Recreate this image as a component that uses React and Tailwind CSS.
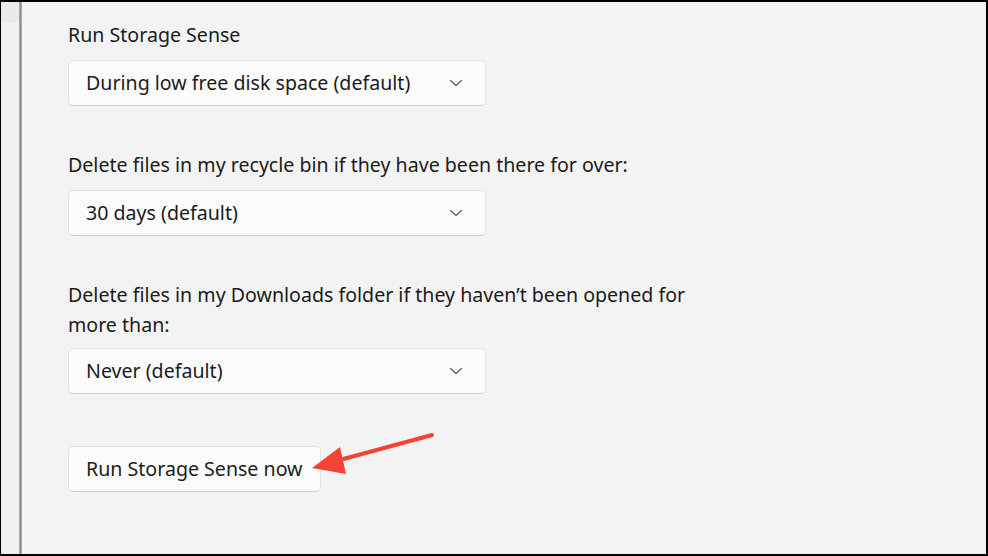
import React from "react";

function Chevron() {
  return (
    <svg width="14" height="8" viewBox="0 0 14 8" fill="none">
      <path d="M1.5 1.5 L7 6.5 L12.5 1.5" stroke="#5c5c5c" strokeWidth="1.3" strokeLinecap="round" strokeLinejoin="round" />
    </svg>
  );
}

function Dropdown({ text }) {
  return (
    <div className="w-[418px] h-[46px] rounded-[5px] bg-[#fbfbfb] border border-[#e3e3e3] border-b-[#cfcfcf] flex items-center justify-between pl-[17px] pr-[22px]">
      <span>{text}</span>
      <Chevron />
    </div>
  );
}

export default function App() {
  return (
    <div
      className="w-[988px] h-[556px] bg-black pt-[2px] pr-[2px] pb-[2px] pl-[1px] overflow-hidden"
      style={{ fontFamily: '"Noto Sans", "Open Sans", sans-serif' }}
    >
      <div className="flex h-full bg-[#f3f3f3]">
        <div className="w-[18px] flex flex-col">
          <div className="h-[20px] bg-[#e9e9e9]" />
          <div className="flex-1 bg-[#f0f0f0]" />
        </div>
        <div className="w-[3px] bg-[#8b8b8b] border-x border-[#a9a9a9]" />
        <div className="flex-1 pl-[46px] pt-[18px] text-[19.6px] leading-[30px] text-[#1b1b1b] relative">
          <div>Run Storage Sense</div>
          <div className="mt-[10px]"><Dropdown text="During low free disk space (default)" /></div>
          <div className="mt-[44px]">Delete files in my recycle bin if they have been there for over:</div>
          <div className="mt-[10px]"><Dropdown text="30 days (default)" /></div>
          <div className="mt-[44px]">
            Delete files in my Downloads folder if they haven’t been opened for
            <br />
            more than:
          </div>
          <div className="mt-[8px]"><Dropdown text="Never (default)" /></div>
          <div className="mt-[52px]">
            <button className="h-[46px] px-[17px] rounded-[5px] bg-[#fbfbfb] border border-[#e3e3e3] border-b-[#cfcfcf] leading-[30px]">
              Run Storage Sense now
            </button>
          </div>
          <svg className="absolute left-0 top-0 pointer-events-none" width="965" height="552" viewBox="0 0 965 552">
            <g transform="translate(-22,-2)">
              <line x1="432" y1="435" x2="336" y2="461" stroke="#f44336" strokeWidth="4" strokeLinecap="round" />
              <polygon points="312,468 340,447 346,474" fill="#f44336" />
            </g>
          </svg>
        </div>
      </div>
    </div>
  );
}
